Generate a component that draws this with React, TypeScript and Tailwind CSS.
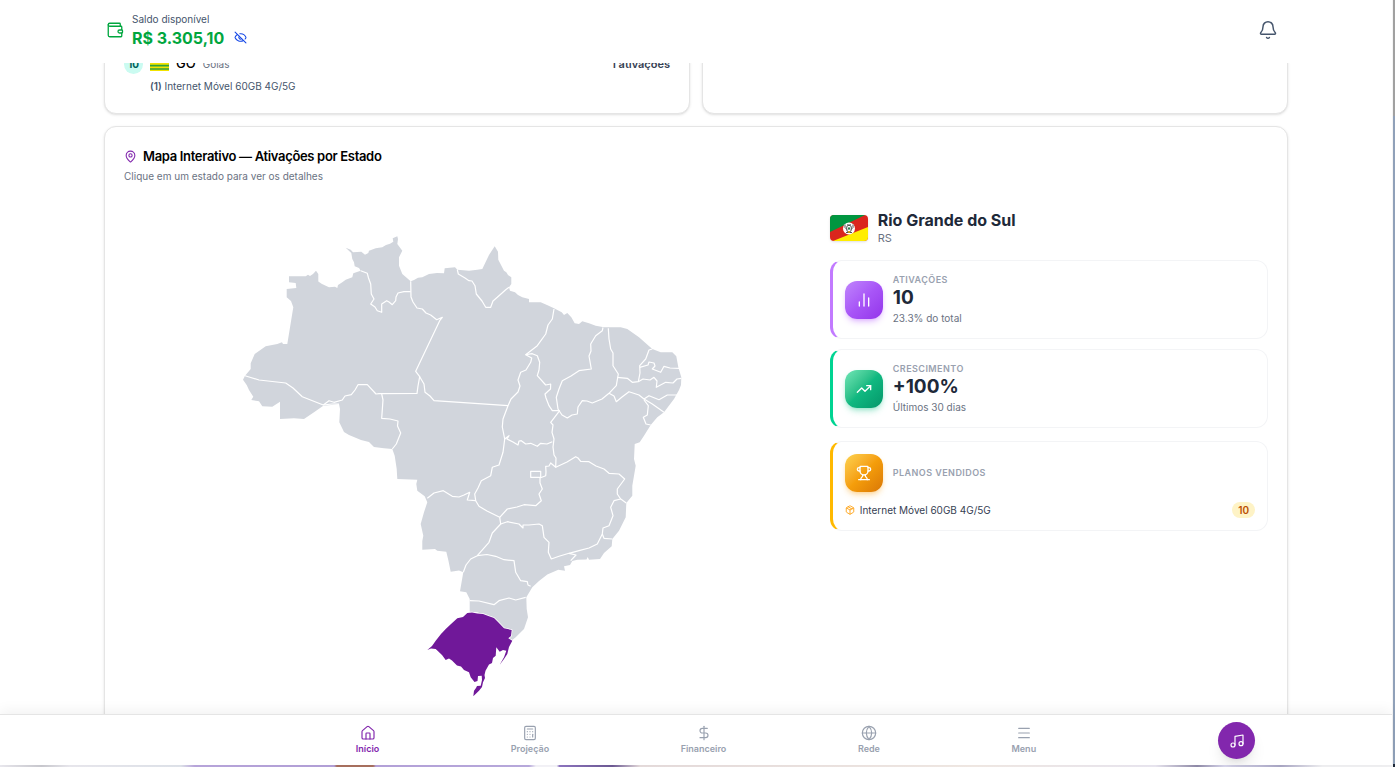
import {
  Bell,
  Calculator,
  ChartNoAxesColumn,
  DollarSign,
  EyeOff,
  Globe,
  House,
  MapPin,
  Menu,
  Music,
  Package,
  TrendingUp,
  Trophy,
  Wallet,
} from 'lucide-react';

const COUNTRY =
  'M290 277.3L306.7 277.3L309 275.7L311 277L314 275L317 271.7L319.3 275L319.3 282.5L323 285L330 288.3L336 287.7L338.3 289L339 286L343.3 283.3L346.7 280.7L353.3 278.3L354.3 274.3L361.7 271.7L360 269L355.7 267.3L355 263.3L353.3 260L352.3 254L346.7 248.7L351.7 250.7L354 253.3L362.3 252.7L366 255.7L369.3 254L370 251.7L376.7 249.3L383.3 248.3L387 246L391 244.7L394.3 242.7L393.7 239.3L398.3 237.3L399 240L398.3 245L403.3 251.7L400 258.3L400 266.7L403.3 275L411.7 282.3L415 281L419 278.8L423.3 278.3L430 275L438 274L445 274.3L445.7 269.3L456 268.3L458.3 270.7L470 271.7L478.3 270.7L483.3 270L490 256L495.7 247.3L499 252.7L499.3 260.7L505 271.7L507.3 273.3L509 276L512.3 278.3L512.3 285L510 288.3L511 291.7L516 293.3L519 296L523.3 298.3L530 300L530 303.3L541.7 303.3L548 306L555 309.3L562.7 313.3L565 316L568.3 314L572.3 318.3L575.7 324.3L580 325L583.3 322.3L590 324.3L596.7 326.7L605 328.3L621.7 328.3L628.3 330L640 338.3L653.3 350L661.7 353.3L673.3 353.3L677.3 357.3L679.3 368.3L682.3 378.3L682 386L680 391L675 400L665 413.3L658.3 418.3L651.7 426L645 436.7L640.7 443.3L635.7 445L635 460L636.7 466.7L633.3 486.7L633.3 496.7L627.3 504L626.7 518.3L620 531.7L613.3 540L612.7 547.3L605 554L601 560L590 560.7L588.7 558L587.5 560.5L578.3 560.7L573.3 562L571 566L565 567.3L566 571.7L559.3 570.7L548.3 575.5L540 582L533.3 588.3L527.3 598.3L527.7 610L529 618.3L525 630L516.7 638.3L513.3 641L509 640L511.7 635L513.3 631.7L505 629L498.3 621.7L490 617.3L478.3 613.3L470.7 612.7L470.7 600L467.3 593.3L461 592.3L464.3 573.3L460 571.5L451.7 572.7L449.5 562L447.3 552.7L438.3 551.7L436 550L423.3 550.7L423.3 542L424.3 536.7L421.7 525L425 513.3L428.3 503.3L425.7 497.3L418.3 491.7L417.3 485L418.3 480.7L398.3 480L397.7 470L395.7 456.7L393.3 450L385 449.3L375 448L370 443L362 441L350 436L345 433L340.3 423.3L341 410L340 405L332 406L324.3 406.7L315 413.3L305 420L295 419.3L281 420L281 402.7L273.3 407.7L263.3 407.3L260 402.3L252.3 401L254.3 397.7L250 391L247.7 386L244 380.7L246 376.7L251.7 370L251.7 364.3L255.7 355L266.7 347.3L278.3 345L283 343.3L284 345L288.3 345L294.3 308.3L292 302L287.7 298.3L287.7 290L297.3 289L296.7 284L290 283.3Z';

const BORDERS = [
  // Norte
  'M361.7 271.7L368.3 274.3L369.5 279L371.7 285L372.3 295L375 300L371.7 305L376 308L378.3 311.7L382.7 313.3L382.7 305L387.7 301.7L390 303L393.3 305.7L396.7 301.7L397 298L399 294L405 292.7L411.7 292.7',
  'M411.7 282.3L412 298L414 303L418 309L423.3 310L427 314L431.7 316L437.7 320.7L443.3 318.3L440.7 321.7L416.7 372.3L420.7 377.7L419 387L418 394.3L380 394.7L377 395L368.3 385.7L359 385.7L356 391L352.3 395.7L346 397L343.3 401L335 403.3L330 401.7L324.3 406',
  'M246 376.7L260 381L286.7 384L294 389L303.3 397.7L324.3 406L333 405L340 405',
  'M420.7 377.7L425 385L426 393.3L431 397L435 401.7L509 406.7',
  'M382.7 395L384 401L382.7 419.3L391 420L399 422L398.5 427L401.7 434L397.3 445L393.3 450',
  'M458.3 270.7L459.3 275L466 279L470 281.7L473 282L476 286.7L477.3 295L483 302L486.7 308.3L491.7 308.3L494 302L498.3 298.3L506.7 290.7L510 288.3',
  'M555 310L553.3 320L549 326L546.7 335L538.3 346.7L526.7 355.7L532.7 359L531.7 363.3L527 371L521.7 373.3L519 381L521 387L519 393L512 400L509 406.7L504 420L503.3 428L505.7 440L504 453.3L500 466L493.3 468.3L491.7 476.7L482.3 481.7L479 489L475.7 495L476.7 501.7',
  'M526.7 355.7L533.3 354.7L538.3 356.7L540.7 363.3L540 371L538.3 376.7L546.7 386L551.7 385L551.5 390L546 395L547 399L550 406.7L553.3 411.7L560.7 411.7',
  // Centro-Oeste
  'M505.7 440L510 436.7L508 440L514 443L519 446L520 442L522.3 441.7L526.7 445L531.7 444.3L538.3 447.3L541.7 444.3L548 445L553.3 442.7',
  'M560.7 411.7L551.7 423.3L554 426L553 433.3L555 440L554 448L555 456L557 459L556.7 468.3L551.7 464L550 467L546.7 467.3L547 473L546.7 476.7L541 479L541 484L543.3 490L540 495L542.3 501.7L536.7 506.7L525 505.7L518 508L508.3 510L500.7 518.3L488 512L480 507.3L476.7 501.7L468.3 501L470.7 493.3L465 496L460 498L453.3 497.3L444.3 491.7L435 494L428.3 499.3',
  'M531.7 472.3H541.7V478.3H531.7Z',
  'M500.7 518.3L501.7 525L493.3 534L490 543.3L478.3 556.7L471.7 560L467 566L464.3 573.3',
  // Sudeste
  'M556.7 468.3L568 463L576.7 457.7L579 459L581.7 462.3L590 462.7L597 467L605 470L610 474.3L620 475L625.7 480L622 485L618.3 490L618.3 495L621.7 500L627.3 504',
  'M621.7 500L615 501.7L611.7 508.3L614 516.7L610 526.7L604 529L603.3 535L598.3 545L590 549L580 551.7L570 554.3L560 557.3L552.3 560L549.3 553.3L550 543.3L545 538.3L543.3 526.7L540 525L530 526L524 526L524 529L520 525L508.3 522.7L501.7 525',
  'M603.3 535L605 539.3L613.3 540',
  'M570 554.3L577 556L571.7 561.7',
  'M478.3 556.7L488 555.5L496.7 557.3L505 560.7L515 561.7L516.7 573.3L521.7 581.7L528.3 582.7L529 586L531.7 587.3',
  'M470.7 601.7L480 602L495 605.7L500 601.7L510 599L516.7 601L526.7 598.3',
  // Nordeste
  'M604 328.5L603.3 331.7L596.7 336.7L591.7 345L592 352L590 357L592.3 370L580 371.7L572 377L563.3 381.7L560 390L557.3 398.3L559 410L563 416L568.3 419L573 416L578.3 415L579 408L583.3 401.7L588 402L593.3 404L603 400L610 394.3',
  'M609.3 329.3L610 340L611.7 350L614 354L614 366.7L619.3 375L617.3 386.7L610 394.3L615 397L617.3 402.7L623 398L630 392.7L640 396L645 400L650 396.7L660 400.7L668.3 396L678.3 396',
  'M618.3 378.3L628.3 379.3L633.3 383.3L639.3 382.7L641 374L640.7 366.7L646.7 360L650 351L653.3 350',
  'M640.7 368.3L649 366L650 363L655 364L656 367L653.3 370L661.7 373.3L665 367.3L671 369L680 369.3',
  'M639.3 382.7L644 380L651 381L655 378.3L658 382L657.3 388.3L666.7 383.3L674 384L678 380L682.3 379.3',
  'M645 400L653.3 405L665 413.3',
  'M645 401L649.3 406.7L648.3 416L644.3 418.3L647 425L651.7 426',
];

const RIO_GRANDE =
  'M468.3 614L473 613.6L478.3 614.6L484 615L490 617.3L495 619L499 623L505 629.3L512.7 631L512 637L509.3 639.3L513.3 641.7L510 648L508.3 655L505 660L500.7 665.7L505 658.3L507.3 651.7L504 651L500.7 652.8L497.3 648.3L496.7 656.7L494 659L493 664L490 665.5L486.5 671.7L485.5 676L486 679L484 683.3L483 688L480 691.7L474.3 697.3L475 691.7L477 689L478 687L481.7 686.7L483 681L482.7 676.7L479 677L478.5 682L475.5 683L471.7 678.3L470 673.3L465 671L462 667.5L458 666.5L453 661.5L450 659.5L446.7 661L443 656L436.7 650L432 649.5L428.3 651L433 647L436.7 641.7L442 635L446.7 630L452 625L458.3 619.3L464 618Z';

function BrazilMap() {
  return (
    <svg
      viewBox="243 235 441 464"
      className="w-full max-w-[441px]"
      role="img"
      aria-label="Mapa do Brasil por estado"
      strokeLinejoin="round"
    >
      <path d={COUNTRY} fill="#d1d5dc" />
      <g fill="none" stroke="#fff" strokeWidth="1.2">
        {BORDERS.map((d) => (
          <path key={d} d={d} />
        ))}
      </g>
      <path d={RIO_GRANDE} fill="#701899" stroke="#fff" strokeWidth="1.5" paintOrder="stroke" />
    </svg>
  );
}

function FlagGO() {
  return (
    <svg viewBox="0 0 19 13" className="w-[19px] h-[13px]" aria-hidden="true">
      <rect width="19" height="13" fill="#f2e300" />
      <path d="M0 .8h19M0 4.2h19M0 7.6h19M0 11h19" stroke="#2fa13c" strokeWidth="1.6" />
    </svg>
  );
}

function FlagRS() {
  return (
    <svg viewBox="0 0 38 26" className="w-[38px] h-[26px] rounded-sm shadow-sm" aria-hidden="true">
      <rect width="38" height="26" fill="#da251d" />
      <path d="M0 0H35L0 17Z" fill="#009640" />
      <path d="M38 12V26H3Z" fill="#ffed00" />
      <circle cx="19" cy="13.5" r="6" fill="#fff" />
      <g fill="none" stroke="#555" strokeWidth="1">
        <ellipse cx="19" cy="13.5" rx="2.5" ry="3.5" />
        <path d="M15 9.5v3l2 2M23 9.5v3l-2 2M16 17.5h6M17.5 9l1.5 2 1.5-2" />
      </g>
      <circle cx="19" cy="13.5" r="1.2" fill="#2e7d4f" />
      <circle cx="19" cy="17" r="1" fill="#e0a800" />
    </svg>
  );
}

const stats = [
  {
    label: 'ATIVAÇÕES',
    value: '10',
    note: '23.3% do total',
    icon: ChartNoAxesColumn,
    border: 'border-l-purple-400',
    badge: 'from-[#c084fc] via-[#a855f7] to-[#9333ea] shadow-purple-500/30',
  },
  {
    label: 'CRESCIMENTO',
    value: '+100%',
    note: 'Últimos 30 dias',
    icon: TrendingUp,
    border: 'border-l-emerald-400',
    badge: 'from-[#6ee7b7] via-[#10b981] to-[#059669] shadow-emerald-500/30',
  },
];

const navItems = [
  { name: 'Início', icon: House, active: true },
  { name: 'Projeção', icon: Calculator, active: false },
  { name: 'Financeiro', icon: DollarSign, active: false },
  { name: 'Rede', icon: Globe, active: false },
  { name: 'Menu', icon: Menu, active: false },
];

function Header() {
  return (
    <header className="relative z-10 shrink-0 bg-white h-[63px] pb-1">
      <div className="max-w-[1184px] mx-auto px-0.5 h-full flex items-center justify-between">
        <div className="flex items-center gap-2">
          <Wallet className="w-[18px] h-[18px] text-green-600" strokeWidth={1.75} />
          <div>
            <p className="text-[10px] leading-4 text-slate-600">Saldo disponível</p>
            <div className="flex items-center gap-2.5">
              <span className="text-base leading-[22px] font-bold text-green-600">R$ 3.305,10</span>
              <button type="button" aria-label="Ocultar saldo" className="text-blue-700">
                <EyeOff className="w-[13px] h-[13px]" />
              </button>
            </div>
          </div>
        </div>
        <button type="button" aria-label="Notificações" className="mr-2 text-slate-600">
          <Bell className="w-5 h-5" strokeWidth={1.75} />
        </button>
      </div>
    </header>
  );
}

function RankingRow() {
  return (
    <div className="grid grid-cols-2 gap-3 -mt-3">
      <section className="bg-white border border-neutral-200 rounded-xl shadow-sm px-[19px] pb-[19px]">
        <div className="flex items-center justify-between h-6">
          <div className="flex items-center gap-[7px]">
            <span className="w-[19px] h-[19px] rounded-full bg-teal-100 text-teal-800 text-[10px] font-bold flex items-center justify-center">
              10
            </span>
            <FlagGO />
            <span className="text-[13px] font-medium text-black">GO</span>
            <span className="text-[10px] text-gray-500">Goiás</span>
          </div>
          <span className="text-[11px] font-semibold text-gray-700">1 ativações</span>
        </div>
        <p className="mt-0.5 pl-[26px] text-[10px] leading-4 text-slate-600">
          <span className="font-semibold">(1)</span> Internet Móvel 60GB 4G/5G
        </p>
      </section>
      <section className="bg-white border border-neutral-200 rounded-xl shadow-sm" />
    </div>
  );
}

function StateDetails() {
  return (
    <div className="flex flex-col">
      <div className="flex items-center gap-2.5">
        <FlagRS />
        <div>
          <h3 className="text-base leading-5 font-bold text-gray-800">Rio Grande do Sul</h3>
          <p className="text-[11px] leading-4 text-gray-500">RS</p>
        </div>
      </div>

      <div className="mt-3.5 flex flex-col gap-2.5">
        {stats.map(({ label, value, note, icon: Icon, border, badge }) => (
          <div
            key={label}
            className={`flex items-center gap-2.5 h-[79px] px-3 border border-gray-100 border-l-3 rounded-xl ${border}`}
          >
            <div
              className={`w-[38px] h-[38px] rounded-xl bg-linear-to-br shadow-md flex items-center justify-center ${badge}`}
            >
              <Icon className="w-4 h-4 text-white" strokeWidth={2} />
            </div>
            <div>
              <p className="text-[9px] leading-3 font-semibold tracking-wider text-gray-400">{label}</p>
              <p className="text-[19px] leading-6 font-bold text-gray-800">{value}</p>
              <p className="text-[10px] leading-4 text-gray-500">{note}</p>
            </div>
          </div>
        ))}
      </div>

      <div className="mt-[13px] p-3 border border-gray-100 border-l-3 border-l-amber-400 rounded-xl">
        <div className="flex items-center gap-2.5">
          <div className="w-[38px] h-[38px] rounded-xl bg-linear-to-br from-[#fcd34d] via-[#f59e0b] to-[#d97706] shadow-md shadow-amber-500/30 flex items-center justify-center">
            <Trophy className="w-4 h-4 text-white" strokeWidth={2} />
          </div>
          <p className="text-[9px] leading-3 font-semibold tracking-wider text-gray-400">PLANOS VENDIDOS</p>
        </div>
        <div className="mt-2.5 flex items-center justify-between">
          <div className="flex items-center gap-[5px] text-[10px] leading-4 text-gray-700">
            <Package className="w-2.5 h-2.5 text-amber-500" />
            Internet Móvel 60GB 4G/5G
          </div>
          <span className="rounded-full bg-amber-100 px-1.5 text-[10px] leading-4 font-semibold text-amber-700">
            10
          </span>
        </div>
      </div>
    </div>
  );
}

function MapCard() {
  return (
    <section className="mt-3 bg-white border border-neutral-200 rounded-xl shadow-sm px-[19px] pt-[19px] pb-8">
      <div className="flex items-center gap-1.5">
        <MapPin className="w-[13px] h-[13px] text-[#8227ad]" />
        <h2 className="text-[13px] leading-5 font-semibold tracking-tight text-black">
          Mapa Interativo — Ativações por Estado
        </h2>
      </div>
      <p className="mt-0.5 text-[10px] leading-4 text-gray-500">Clique em um estado para ver os detalhes</p>

      <div className="mt-[26px] grid grid-cols-[14fr_9fr] gap-6">
        <div className="flex justify-center pt-6 pr-1">
          <BrazilMap />
        </div>
        <StateDetails />
      </div>
    </section>
  );
}

function BottomNav() {
  return (
    <nav className="relative z-10 shrink-0 bg-white border-t border-neutral-200 shadow-[0_-4px_12px_rgba(0,0,0,0.05)]">
      <div className="max-w-[812px] mx-auto h-[50px] flex items-center justify-around">
        {navItems.map(({ name, icon: Icon, active }) => (
          <a
            key={name}
            href="#"
            className={`flex flex-col items-center gap-0.5 ${active ? 'text-[#8227ad]' : 'text-gray-400'}`}
          >
            <Icon className="w-4 h-4" strokeWidth={1.75} />
            <span className="text-[9px] leading-3 font-semibold">{name}</span>
          </a>
        ))}
      </div>
      <button
        type="button"
        aria-label="Música"
        className="absolute right-[137px] top-[7px] w-[37px] h-[37px] rounded-full bg-[#8227ad] text-white shadow-lg flex items-center justify-center"
      >
        <Music className="w-4 h-4" strokeWidth={1.75} />
      </button>
    </nav>
  );
}

export default function App() {
  return (
    <div className="h-screen flex overflow-hidden bg-white font-[Inter,sans-serif]">
      <div className="flex-1 min-w-0 flex flex-col">
        <Header />
        <main className="flex-1 min-h-0 overflow-hidden">
          <div className="max-w-[1184px] mx-auto">
            <RankingRow />
            <MapCard />
          </div>
        </main>
        <BottomNav />
        <div className="h-0.5 shrink-0 bg-[linear-gradient(90deg,#e9e8ee_0%,#c9c9cf_3%,#e9e8ee_5%,#dfe3ea_13%,#b9a6dc_14%,#b3a0d8_24%,#a8705f_24.2%,#a8705f_26.8%,#b5a2da_27%,#b9aadd_38%,#f4f3f8_38.5%,#f4f3f8_40%,#8d74c0_40.2%,#6d5a94_44%,#e6dcdc_46%,#f1e9e4_70%,#e9e6f0_83%,#8f8aa8_86%,#dcdaf0_88%,#a9a6c4_92%,#f0f0f2_95%)]" />
      </div>
      <div className="w-[3px] shrink-0 flex flex-col border-l border-neutral-100">
        <div className="h-[116px] bg-neutral-400" />
        <div className="flex-1 bg-slate-400" />
        <div className="h-[3px] bg-gray-800" />
      </div>
    </div>
  );
}
